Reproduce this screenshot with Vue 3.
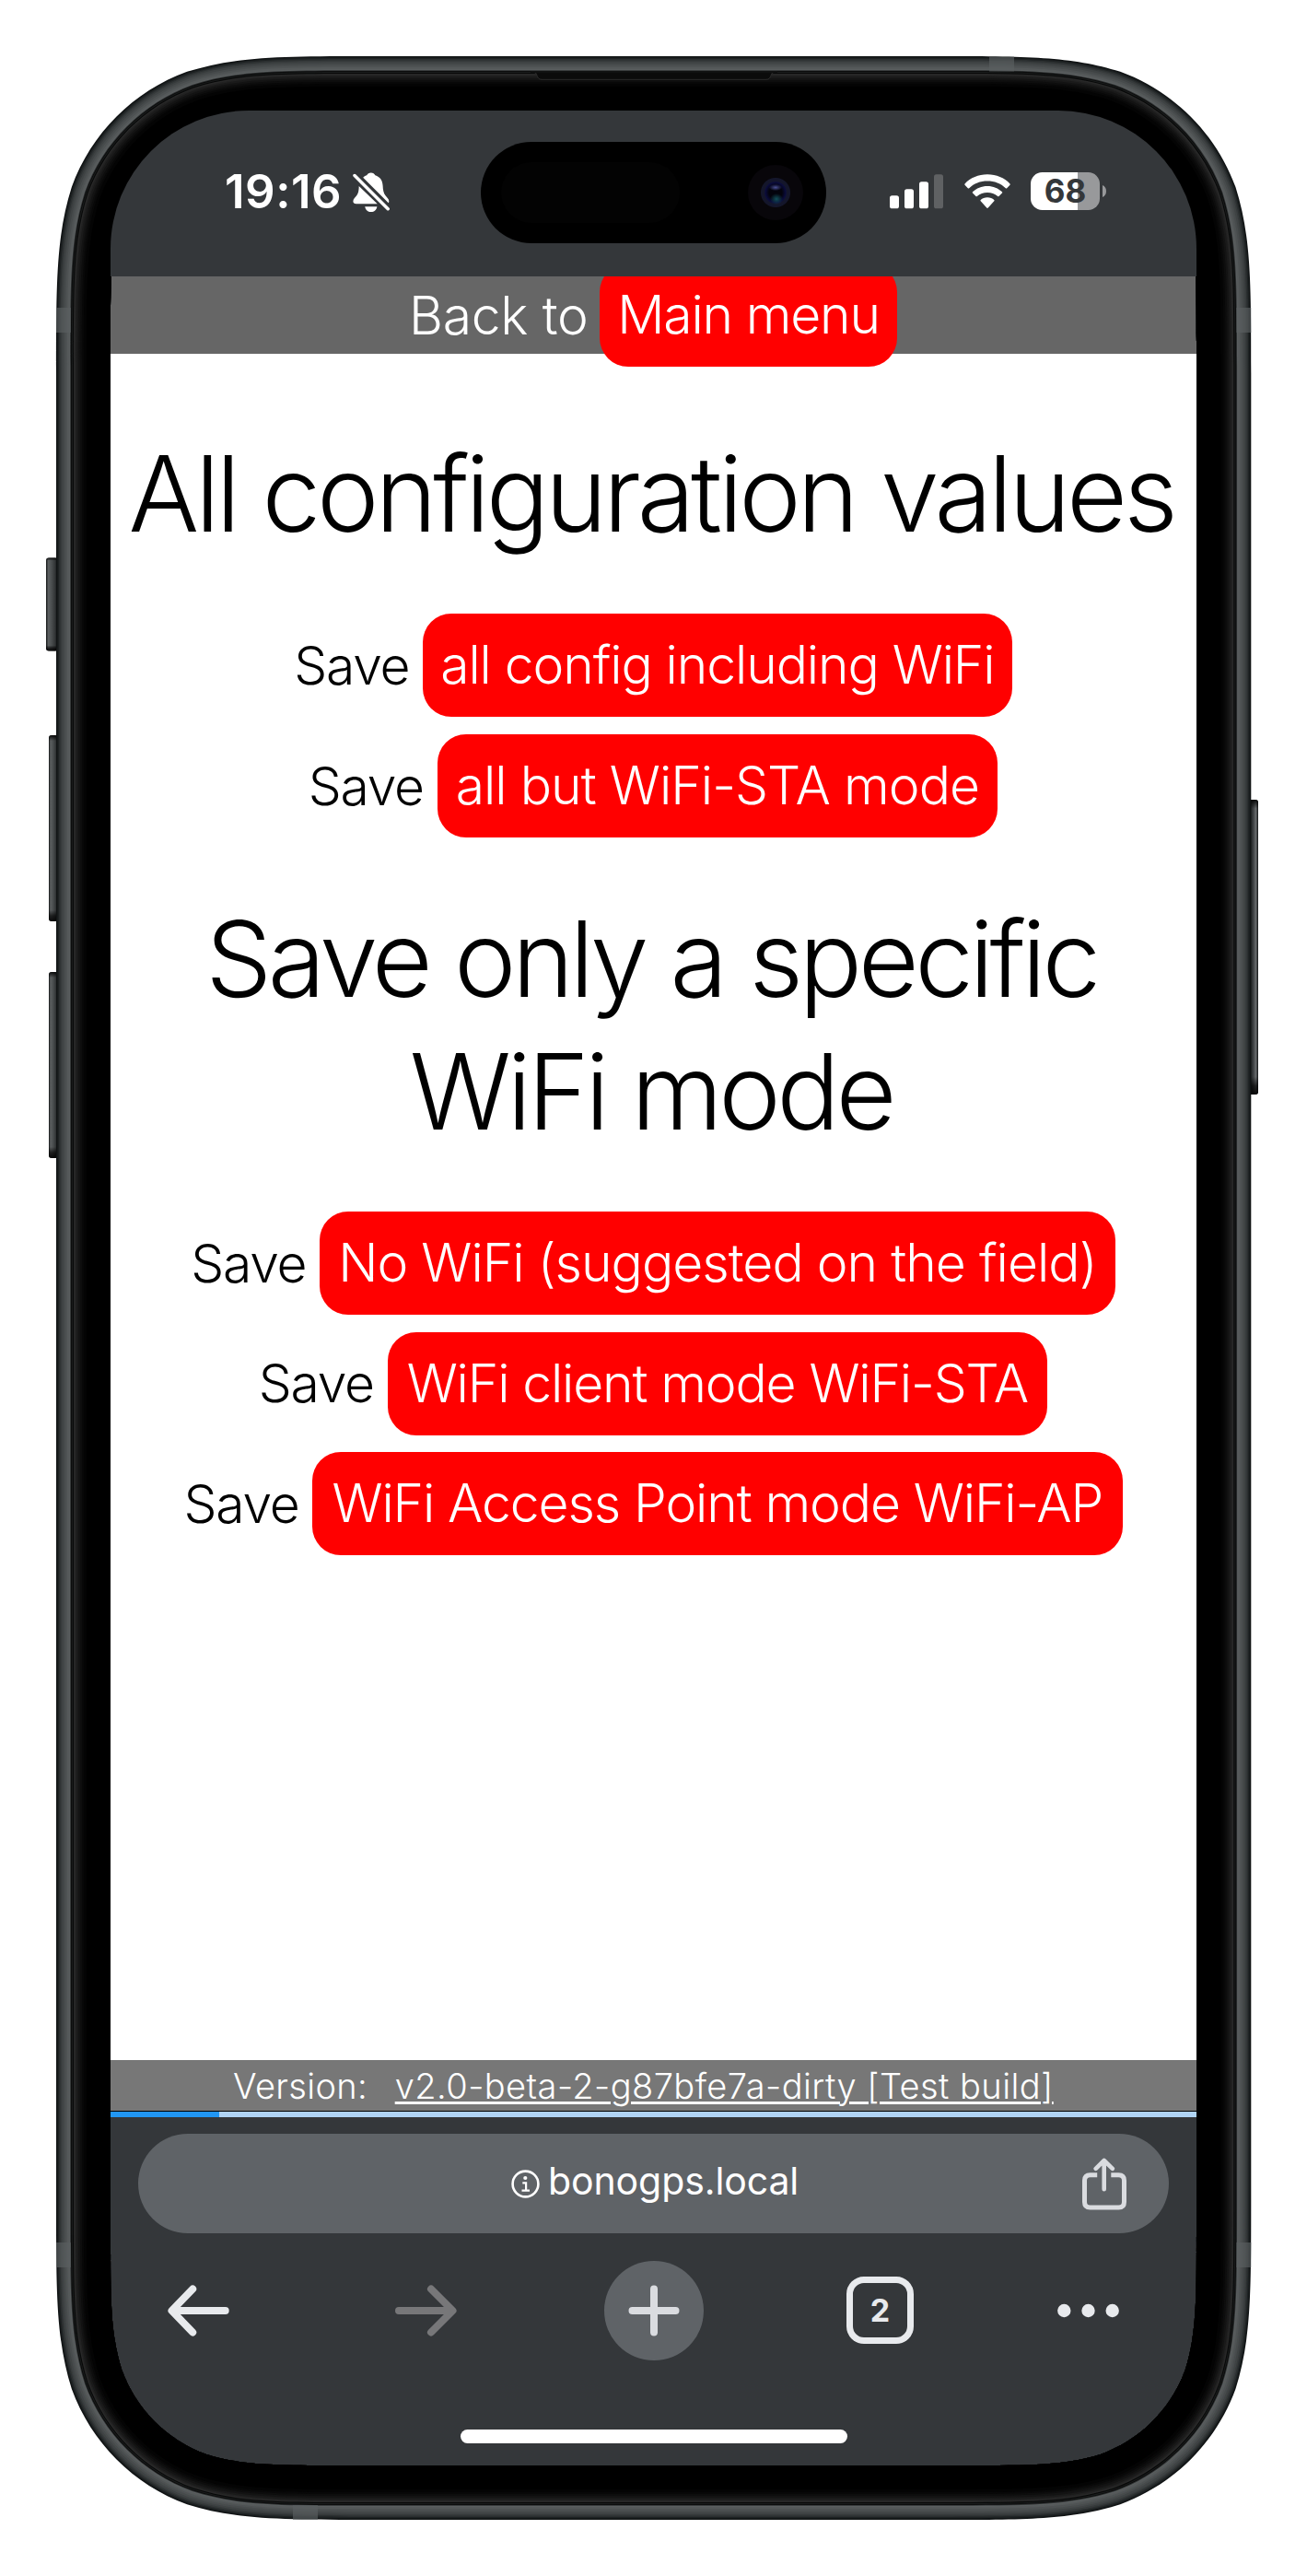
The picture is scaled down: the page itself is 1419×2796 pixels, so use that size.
<script setup>
// Rounded rectangle with smoothly eased corners
function squircle(x, y, w, h, r) {
  const X = x + w
  const Y = y + h
  const a = 1.528665 * r, b = 1.08849296 * r, c = 0.86840694 * r, d = 0.63149379 * r
  const e = 0.37282383 * r, f = 0.16905956 * r, g = 0.07491139 * r
  return [
    `M${x + a} ${y}H${X - a}`,
    `C${X - b} ${y} ${X - c} ${y} ${X - d} ${y + g}C${X - e} ${y + f} ${X - f} ${y + e} ${X - g} ${y + d}C${X} ${y + c} ${X} ${y + b} ${X} ${y + a}`,
    `V${Y - a}`,
    `C${X} ${Y - b} ${X} ${Y - c} ${X - g} ${Y - d}C${X - f} ${Y - e} ${X - e} ${Y - f} ${X - d} ${Y - g}C${X - c} ${Y} ${X - b} ${Y} ${X - a} ${Y}`,
    `H${x + a}`,
    `C${x + b} ${Y} ${x + c} ${Y} ${x + d} ${Y - g}C${x + e} ${Y - f} ${x + f} ${Y - e} ${x + g} ${Y - d}C${x} ${Y - c} ${x} ${Y - b} ${x} ${Y - a}`,
    `V${y + a}`,
    `C${x} ${y + b} ${x} ${y + c} ${x + g} ${y + d}C${x + f} ${y + e} ${x + e} ${y + f} ${x + d} ${y + g}C${x + c} ${y} ${x + b} ${y} ${x + a} ${y}Z`,
  ].join('')
}

const hole = squircle(120, 120, 1179, 2556, 164)

const shades = [
  [0, '#111415'], [1.5, '#1e2223'], [3, '#2b2f30'], [4.5, '#363a3b'], [6, '#3f4344'],
  [8, '#474b4c'], [10, '#4e5253'], [12, '#55595a'], [14, '#5a5e5f'], [15.2, '#303334'],
  [16, '#0b0c0c'], [17, '#1a1c1c'], [18, '#070808'], [19, '#282828'], [20.5, '#212121'],
  [22, '#1a1a1a'], [24, '#131313'], [26, '#0d0d0d'], [28, '#080808'], [30, '#040404'], [33, '#000'],
]
const layers = shades.map(([inset, color]) => ({
  color,
  d: squircle(61 + inset, 61 + inset, 1297.3 - 2 * inset, 2674 - 2 * inset, 225 - inset) + hole,
}))

const groups = [
  {
    title: [{ text: 'All configuration values', spacing: -4.24 }],
    rows: [
      { label: 'all config including WiFi', width: 639.8, spacing: -1.1 },
      { label: 'all but WiFi-STA mode', width: 608.7, spacing: -0.96 },
    ],
  },
  {
    title: [
      { text: 'Save only a specific', spacing: -4.5 },
      { text: 'WiFi mode', spacing: -4.42 },
    ],
    rows: [
      { label: 'No WiFi (suggested on the field)', width: 863.8, spacing: -0.98 },
      { label: 'WiFi client mode WiFi-STA', width: 716.7, spacing: -1.15 },
      { label: 'WiFi Access Point mode WiFi-AP', width: 879.3, spacing: -1.12 },
    ],
  },
]
</script>

<template>
  <div class="page">
    <div class="screen">
      <header class="status">
        <div class="clock">
          <span class="time">19:16</span>
          <svg class="bell" width="40" height="44" viewBox="0 0 40 44" fill="#fff">
            <path d="M11.2 5.7C12.6 4.3 14.2 3.6 15.2 3.3C16 1.4 17.6 .4 19.8 .4C22 .4 23.6 1.4 24.4 3.3C29.500 5 32.300 8.800 32.600 14.500C32.800 19.500 33.500 22.700 35.500 25.300C37.500 27.700 39.300 29.200 39.300 31.500Q39.300 32.700 38.700 33.200Z" />
            <path d="M6.700 15L26.700 34.300H3.800C1.600 34.300 .4 33.200 .4 31.500C.4 28.900 2.500 27.500 4.400 25C6.200 22.500 6.600 19.500 6.700 15Z" />
            <path d="M13.200 37.200H26.400C25.700 41 23.300 43.100 19.800 43.100C16.300 43.100 13.900 41 13.200 37.200Z" />
            <path d="M2 3.600L38.200 39.700" stroke="#34373a" stroke-width="7.500" />
            <path d="M2 3.600L38.200 39.700" stroke="#fff" stroke-width="3.500" stroke-linecap="round" />
          </svg>
        </div>
        <div class="island">
          <span class="sensor"></span>
          <span class="lens"></span>
        </div>
        <div class="indicators">
          <svg width="58" height="38" viewBox="0 0 58 38" fill="#fff">
            <rect x="0" y="23.300" width="10" height="14" rx="2.600" />
            <rect x="16" y="16.300" width="10" height="21" rx="2.600" />
            <rect x="32" y="8.300" width="10" height="29" rx="2.600" />
            <rect x="48" y=".300" width="10" height="37" rx="2.600" fill="#5f6163" />
          </svg>
          <svg class="wifi" width="50" height="38" viewBox="0 0 50 38" fill="#fff">
            <path d="M25 .3C34.800 .3 43.300 4 49.500 10.400Q50 11 49.500 11.700L46.200 15.200Q45.500 15.900 44.800 15.200C39.500 10 32.800 7.500 25 7.500C17.200 7.500 10.500 10 5.200 15.200Q4.500 15.900 3.800 15.200L.5 11.700Q0 11 .5 10.400C6.700 4 15.200 .3 25 .3Z" />
            <path d="M25 12.900C31.300 12.900 36.800 15.200 41 19.200Q41.600 19.900 41 20.600L37.500 24Q36.900 24.600 36.200 24C33 21.300 29.300 19.900 25 19.900C20.700 19.900 17 21.300 13.800 24Q13.100 24.600 12.500 24L9 20.600Q8.400 19.900 9 19.200C13.200 15.200 18.700 12.900 25 12.900Z" />
            <path d="M25 25.300C28 25.300 30.400 26.300 32.300 27.900Q33 28.600 32.300 29.300L25.800 36.600Q25 37.400 24.200 36.600L17.700 29.300Q17 28.600 17.700 27.900C19.600 26.300 22 25.300 25 25.300Z" />
          </svg>
          <div class="battery">68</div>
          <svg width="4" height="13" viewBox="0 0 4 13"><path d="M0 0C2.500 1 4 3.500 4 6.500S2.500 12 0 13Z" fill="#98999b" /></svg>
        </div>
      </header>

      <nav class="back">
        <span class="back-label">Back to</span>
        <a class="pill menu">Main menu</a>
      </nav>

      <main class="content">
        <section v-for="group in groups" :key="group.title[0].text">
          <h1>
            <span v-for="line in group.title" :key="line.text" :style="{ letterSpacing: line.spacing + 'px' }">{{ line.text }}</span>
          </h1>
          <div v-for="row in group.rows" :key="row.label" class="row">
            <span class="save">Save</span>
            <a class="pill" :style="{ width: row.width + 'px', letterSpacing: row.spacing + 'px' }">{{ row.label }}</a>
          </div>
        </section>
      </main>

      <footer class="version">
        <span class="version-label">Version:</span>
        <a class="version-link">v2.0-beta-2-g87bfe7a-dirty [Test build]</a>
      </footer>
      <div class="progress"><div class="progress-value"></div></div>

      <div class="browser">
        <div class="address">
          <svg class="info" width="31" height="31" viewBox="0 0 31 31" fill="none" stroke="#fff" stroke-width="2.600">
            <circle cx="15.500" cy="15.500" r="13.900" />
            <circle cx="15.300" cy="9" r="2.100" fill="#fff" stroke="none" />
            <path d="M12.300 14.400H16.100V22.700M11.500 22.700H20" stroke-width="2.200" />
          </svg>
          <span>bonogps.local</span>
          <svg class="share" width="48" height="57" viewBox="0 0 48 57" fill="none" stroke="#dadce0" stroke-width="5">
            <path d="M16.200 18.800H8.500Q2.500 18.800 2.500 24.800V48Q2.500 54 8.500 54H39.500Q45.500 54 45.500 48V24.800Q45.500 18.800 39.500 18.800H31.300" />
            <path d="M23.700 34.300V3.500M14.700 11.800L23.700 3L32.800 11.800" stroke-width="4.600" stroke-linecap="round" stroke-linejoin="round" />
          </svg>
        </div>
        <div class="tools">
          <svg width="92" height="56" viewBox="0 0 92 56" fill="none" stroke="#e8eaed" stroke-width="8" stroke-linecap="round" stroke-linejoin="round">
            <path d="M62.700 28H5M27.200 4.500L4.500 28L27.200 51.500" />
          </svg>
          <svg width="72" height="56" viewBox="0 0 72 56" fill="none" stroke="#777779" stroke-width="8" stroke-linecap="round" stroke-linejoin="round">
            <path d="M4 28H62M39 4.500L62.500 28L39 51.500" />
          </svg>
          <div class="plus">
            <svg width="56" height="56" viewBox="0 0 56 56" fill="none" stroke="#dadce0" stroke-width="8" stroke-linecap="round">
              <path d="M4.500 28H51.500M28 4.500V51.500" />
            </svg>
          </div>
          <div class="tabs">2</div>
          <svg width="68" height="16" viewBox="0 0 68 16" fill="#e8eaed">
            <circle cx="8.300" cy="8" r="7.200" /><circle cx="34.500" cy="8" r="7.200" /><circle cx="60.700" cy="8" r="7.200" />
          </svg>
        </div>
        <div class="home"></div>
      </div>
    </div>

    <svg class="frame" width="1419" height="2796" viewBox="0 0 1419 2796">
      <defs>
        <linearGradient id="key-left">
          <stop offset="0" stop-color="#101213" /><stop offset=".18" stop-color="#5c6061" />
          <stop offset=".45" stop-color="#4b4f50" /><stop offset=".75" stop-color="#323536" /><stop offset="1" stop-color="#0c0e0e" />
        </linearGradient>
        <linearGradient id="key-right" x1="1" x2="0">
          <stop offset="0" stop-color="#101213" /><stop offset=".25" stop-color="#66696b" />
          <stop offset=".55" stop-color="#3a3d3f" /><stop offset="1" stop-color="#0c0e0e" />
        </linearGradient>
        <linearGradient id="key-ends" x2="0" y2="1">
          <stop offset="0" stop-color="#000" stop-opacity=".9" /><stop offset=".03" stop-color="#000" stop-opacity="0" />
          <stop offset=".94" stop-color="#000" stop-opacity="0" /><stop offset=".97" stop-color="#000" stop-opacity=".65" />
          <stop offset="1" stop-color="#000" stop-opacity=".9" />
        </linearGradient>
      </defs>
      <g fill="url(#key-left)">
        <rect x="50" y="605.500" width="13" height="101" rx="3" />
        <rect x="53" y="798" width="10" height="202" rx="3" />
        <rect x="53" y="1055" width="10" height="202" rx="3" />
      </g>
      <rect x="1356" y="868" width="10" height="320" rx="3" fill="url(#key-right)" />
      <g fill="url(#key-ends)">
        <rect x="50" y="605.500" width="13" height="101" rx="3" />
        <rect x="53" y="798" width="10" height="202" rx="3" />
        <rect x="53" y="1055" width="10" height="202" rx="3" />
        <rect x="1356" y="868" width="10" height="320" rx="3" />
      </g>
      <path v-for="layer in layers" :key="layer.d" :d="layer.d" :fill="layer.color" fill-rule="evenodd" />
      <g fill="#5a6061" fill-opacity=".65">
        <rect x="61" y="334" width="16" height="27" />
        <rect x="1342.300" y="334" width="16" height="27" />
        <rect x="61" y="2434" width="16" height="27" />
        <rect x="1342.300" y="2434" width="16" height="27" />
        <rect x="1074" y="61.500" width="27" height="16" />
        <rect x="318" y="2719" width="27" height="16" />
      </g>
      <path d="M580 78.500C584 79 582 86.300 588 86.300H832C838 86.300 836 79 840 78.500Z" fill="#0b0b0b" stroke="#2b2b2b" stroke-width="1" />
      <path d="M576 78H844" stroke="#101111" stroke-width="2" />
    </svg>
  </div>
</template>

<style>
body {
  background: #fff;
}
</style>

<style scoped>
.page {
  position: relative;
  box-sizing: border-box;
  width: 1419px;
  height: 2796px;
  padding: 120px;
  background: #fff;
  overflow: hidden;
  font-family: Inter, 'Liberation Sans', sans-serif;
  white-space: nowrap;
}
.frame {
  position: absolute;
  inset: 0;
}
.screen {
  display: flex;
  flex-direction: column;
  width: 1179px;
  height: 2556px;
  overflow: hidden;
  background: #fff;
  border-radius: 150px;
}
.status {
  position: relative;
  z-index: 1;
  display: flex;
  flex: none;
  height: 180px;
  background: #34373a;
}
.clock {
  display: flex;
  align-items: flex-start;
  width: 402px;
  box-sizing: border-box;
  padding-left: 124px;
}
.time {
  margin-top: 56.500px;
  width: 139.300px;
  font-size: 51px;
  font-weight: 600;
  line-height: 62px;
  letter-spacing: 0.500px;
  color: #fff;
}
.bell {
  margin-top: 66.500px;
}
.island {
  display: flex;
  align-items: center;
  box-sizing: border-box;
  width: 374.500px;
  height: 110px;
  margin-top: 34px;
  padding-left: 22px;
  border-radius: 55px;
  background: #000;
}
.sensor {
  width: 194px;
  height: 66px;
  border-radius: 33px;
  background: #030303;
}
.lens {
  width: 60px;
  height: 60px;
  margin-left: 74px;
  border-radius: 50%;
  background:
    radial-gradient(ellipse 7px 3.500px at 30px 24.500px, #4a4f96, transparent),
    radial-gradient(ellipse 7px 6px at 31px 37px, #12505c, transparent),
    radial-gradient(circle at 30px 30px, #03030c 0 7px, #0a0b3c 11px, #14162b 12.500px 15.500px, #08060a 16.500px);
}
.indicators {
  display: flex;
  align-items: flex-start;
  padding: 68.800px 0 0 69.500px;
}
.wifi {
  margin-left: 22.500px;
}
.battery {
  width: 75px;
  height: 41px;
  margin: -1.800px 3px 0 22.500px;
  border-radius: 12.500px;
  background: linear-gradient(90deg, #fff 51px, #98999b 51px);
  color: #34373a;
  font-size: 35px;
  font-weight: 700;
  line-height: 41px;
  text-align: center;
}
.battery + svg {
  margin-top: 12px;
}
.back {
  display: flex;
  flex: none;
  align-items: center;
  justify-content: center;
  box-sizing: border-box;
  height: 84px;
  padding-right: 1px;
  background: #666;
  color: #fff;
  font-size: 57px;
  font-weight: 300;
}
.back-label {
  margin-right: 12.500px;
  letter-spacing: -0.300px;
}
.pill {
  flex: none;
  height: 112px;
  border-radius: 31px;
  background: #f00;
  color: #fff;
  line-height: 112px;
  text-align: center;
}
.menu {
  width: 323px;
  letter-spacing: -1.200px;
}
.content {
  flex: none;
  box-sizing: border-box;
  height: 1852px;
  padding-top: 29.700px;
  color: #000;
}
h1 {
  margin: 50.500px 0 49px;
  padding-right: 5px;
  font-size: 114px;
  font-weight: 300;
  line-height: 144px;
  text-align: center;
}
h1 span {
  display: block;
}
.row {
  display: flex;
  align-items: center;
  justify-content: center;
  box-sizing: border-box;
  height: 130.600px;
  padding-right: 1px;
  font-size: 57px;
  font-weight: 300;
}
.save {
  margin-right: 14.600px;
  letter-spacing: -1.230px;
}
.version {
  display: flex;
  flex: none;
  align-items: center;
  box-sizing: border-box;
  height: 56px;
  padding: 1.500px 0 0 133px;
  border-bottom: 1px solid #000;
  background: #777;
  color: #fff;
  font-size: 38px;
  font-weight: 300;
  line-height: 53px;
}
.version-label {
  width: 175.700px;
  letter-spacing: 0.330px;
}
.version-link {
  letter-spacing: 0.440px;
  text-decoration: underline;
  text-decoration-thickness: 3px;
  text-underline-offset: 3px;
}
.progress {
  flex: none;
  height: 6px;
  background: #b0d4f5;
}
.progress-value {
  width: 118px;
  height: 6px;
  background: #2196f3;
}
.browser {
  flex: 1;
  padding: 18px 30px 0;
  background: #34373a;
}
.address {
  display: flex;
  align-items: center;
  box-sizing: border-box;
  height: 108px;
  padding: 0 46px 0 405px;
  border-radius: 54px;
  background: #5f6367;
  color: #fff;
  font-size: 41px;
  line-height: 100px;
}
.address span {
  margin-bottom: 7px;
  letter-spacing: -0.100px;
}
.info {
  margin: 1px 9px 0 0;
}
.share {
  margin-left: auto;
}
.tools {
  display: flex;
  align-items: center;
  justify-content: space-between;
  height: 167px;
  padding: 0 54px 0 32px;
}
.plus {
  display: flex;
  align-items: center;
  justify-content: center;
  width: 108px;
  height: 108px;
  border-radius: 50%;
  background: #5f6367;
}
.tabs {
  box-sizing: border-box;
  width: 73px;
  height: 73px;
  border: 7px solid #e8eaed;
  border-radius: 19px;
  color: #e8eaed;
  font-size: 34px;
  font-weight: 700;
  line-height: 59px;
  text-align: center;
}
.home {
  width: 420px;
  height: 15px;
  margin: 46px auto 0;
  border-radius: 8px;
  background: #fff;
}
</style>
